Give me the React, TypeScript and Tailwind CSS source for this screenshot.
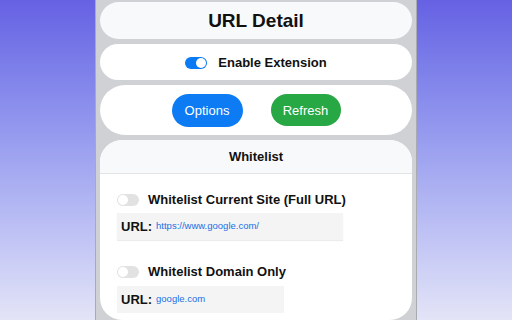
import React from "react";

function Toggle({ on }: { on: boolean }) {
  return on ? (
    <span className="relative inline-block w-[22px] h-[12px] rounded-full bg-[#0b7bf5] shrink-0">
      <span className="absolute right-[1px] top-[1px] w-[10px] h-[10px] rounded-full bg-white" />
    </span>
  ) : (
    <span className="relative inline-block w-[22px] h-[12px] rounded-full bg-[#e2e2e2] shrink-0">
      <span className="absolute left-[1px] top-[1px] w-[10px] h-[10px] rounded-full bg-white" />
    </span>
  );
}

export default function App() {
  return (
    <div className="h-[320px] w-[512px] overflow-hidden bg-gradient-to-b from-[#6661e3] to-[#e4e4f7] font-['Liberation_Sans',Arial,sans-serif] text-[#111]">
      <div className="mx-auto w-[322px] h-full bg-[#cfd1d5] border-x border-[#a9abb1] pl-[4px] pr-[4px] pt-[2px] flex flex-col gap-[5px]">
        <div className="h-[37px] shrink-0 rounded-full bg-[#f8f9fa] flex items-center justify-center text-[19px] font-bold pt-[2px]">
          URL Detail
        </div>
        <div className="h-[36px] shrink-0 rounded-full bg-white flex items-center justify-center gap-[11px] text-[13px] font-bold pt-[1px]">
          <Toggle on />
          <span className="pt-[1px]">Enable Extension</span>
        </div>
        <div className="h-[50px] shrink-0 rounded-[25px] bg-white flex items-center justify-center gap-[28px]">
          <button className="w-[71px] h-[33px] rounded-full bg-[#0d7cf4] text-white text-[13px] pt-[1px]">Options</button>
          <button className="w-[70px] h-[32px] rounded-full bg-[#28a745] text-white text-[13px] pt-[1px]">Refresh</button>
        </div>
        <div className="flex-1 rounded-t-[22px] rounded-b-[22px] bg-white overflow-hidden flex flex-col">
          <div className="h-[34px] shrink-0 bg-[#f8f9fa] border-b border-[#e4e5e7] flex items-center justify-center text-[13px] font-bold">
            Whitelist
          </div>
          <div className="pl-[17px] pt-[19px] flex flex-col">
            <div className="h-[14px] flex items-center gap-[9px] text-[13px] font-bold">
              <Toggle on={false} />
              <span>Whitelist Current Site (Full URL)</span>
            </div>
            <div className="mt-[6px] w-[226px] h-[27px] bg-[#f4f4f4] shadow-[0_1px_1px_#ececec] flex items-center pl-[4px] gap-[4px]">
              <span className="text-[13px] font-bold">URL:</span>
              <span className="text-[9.5px] text-[#1a6fe6]">https://www.google.com/</span>
            </div>
            <div className="mt-[25px] h-[14px] flex items-center gap-[9px] text-[13px] font-bold">
              <Toggle on={false} />
              <span>Whitelist Domain Only</span>
            </div>
            <div className="mt-[7px] w-[167px] h-[27px] bg-[#f4f4f4] flex items-center pl-[4px] gap-[4px]">
              <span className="text-[13px] font-bold">URL:</span>
              <span className="text-[9.5px] text-[#1a6fe6]">google.com</span>
            </div>
          </div>
        </div>
      </div>
    </div>
  );
}
